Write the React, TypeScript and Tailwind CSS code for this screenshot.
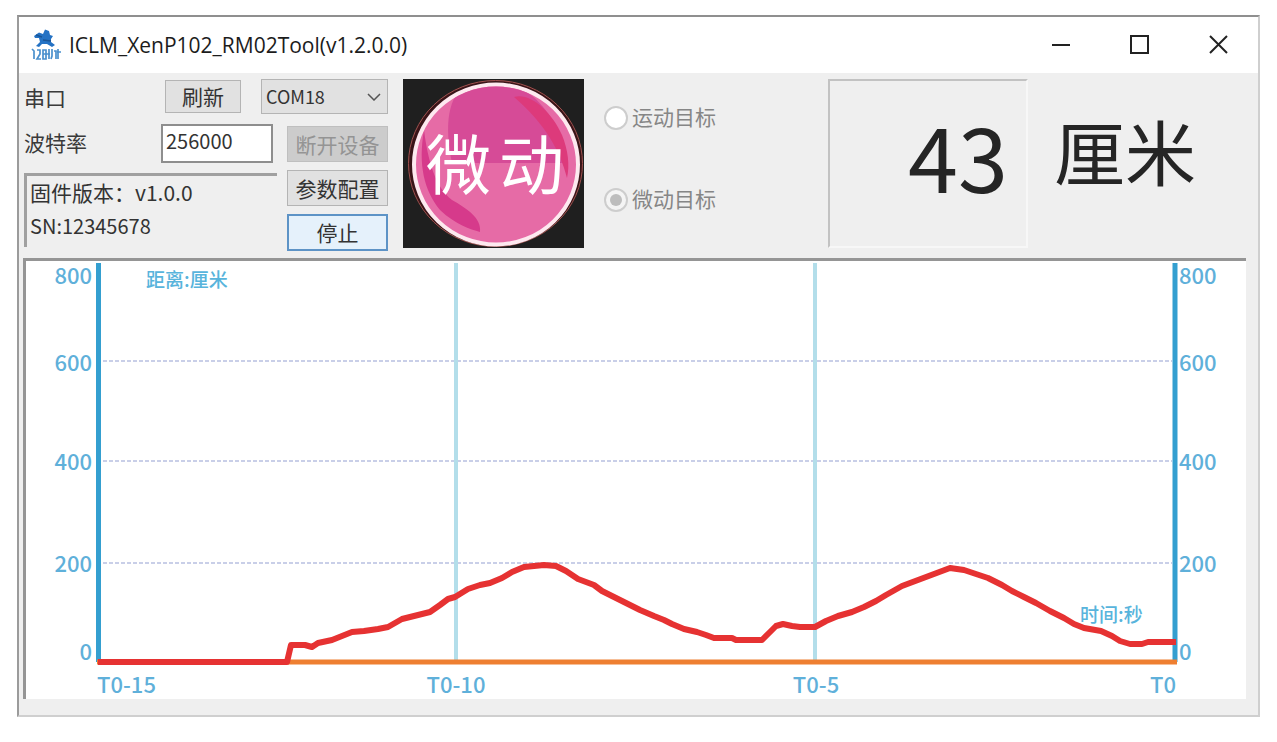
import React from "react";

const TRACE: [number, number][] = [
  [98, 662], [287, 662], [291, 645], [305, 645], [312, 647], [318, 643], [332, 640], [352, 632],
  [364, 631], [378, 629], [388, 627], [402, 619], [418, 615], [430, 612], [440, 605], [448, 599],
  [455, 597], [468, 589], [480, 585], [490, 583], [502, 578], [512, 572], [524, 567], [534, 566],
  [544, 565], [556, 566], [566, 571], [578, 579], [594, 585], [602, 591], [612, 596], [624, 602],
  [640, 610], [654, 616], [664, 620], [672, 624], [684, 629], [697, 632], [706, 635], [714, 638],
  [732, 638], [736, 640], [762, 640], [770, 632], [776, 626], [783, 624], [792, 626], [800, 627],
  [815, 627], [826, 621], [838, 616], [852, 612], [864, 607], [876, 601], [886, 595], [902, 586],
  [918, 580], [934, 574], [950, 568], [964, 570], [976, 574], [988, 578], [1002, 585], [1012, 591],
  [1024, 597], [1036, 603], [1050, 611], [1064, 618], [1074, 624], [1084, 628], [1101, 631],
  [1112, 636], [1120, 641], [1130, 644], [1142, 644], [1148, 642], [1176, 642],
];

const LEVELS = [
  { value: 800, y: 284 },
  { value: 600, y: 371 },
  { value: 400, y: 470 },
  { value: 200, y: 572 },
  { value: 0, y: 660 },
];

const TICKS = [
  { label: "T0-15", x: 97, anchor: "start" as const },
  { label: "T0-10", x: 456, anchor: "middle" as const },
  { label: "T0-5", x: 816, anchor: "middle" as const },
  { label: "T0", x: 1176, anchor: "end" as const },
];

function Logo() {
  return (
    <svg viewBox="0 0 30 32" className="h-8 w-[30px]" aria-hidden="true">
      <path
        d="M3 7 L8 3.500 L12 5 L14 0.500 L18 2 L19 6 L22 7 L20 10 L20 13 L24 16 L21 18 L16 15 L11 15 L8 18 L5 17 L9 13 L8 9 L4 9 Z"
        fill="#2472c4"
      />
      <path d="M5 6 L11 8 M12 11 L20 12" stroke="#1a5596" strokeWidth="1.500" />
      <path
        d="M1 20 L3 22 V30 M6 21 H9 V25 L6 30 H10 M12 21 H15 V30 H12 Z M12 25 H19 M18 20 V30 M21 20 V27 L20 30 M23 22 H25 V30 M27 20 V30 M26 23 H30"
        fill="none"
        stroke="#4a90cd"
        strokeWidth="1.700"
      />
    </svg>
  );
}

function TitleBar() {
  return (
    <header className="flex h-14 items-center bg-white pl-3">
      <Logo />
      <h1 className="ml-2 flex-1 text-[21px] leading-7 text-[#1c1c1c] font-['Open_Sans',sans-serif]">
        ICLM_XenP102_RM02Tool(v1.2.0.0)
      </h1>
      <div className="flex">
        <button type="button" aria-label="最小化" className="flex h-14 w-[79px] items-center justify-center">
          <svg viewBox="0 0 20 20" className="size-5" stroke="#222" strokeWidth="2">
            <path d="M1 10 H19" />
          </svg>
        </button>
        <button type="button" aria-label="最大化" className="flex h-14 w-[79px] items-center justify-center">
          <svg viewBox="0 0 20 20" className="size-5" fill="none" stroke="#222" strokeWidth="2">
            <rect x="1" y="1" width="17" height="17" />
          </svg>
        </button>
        <button type="button" aria-label="关闭" className="flex h-14 w-[79px] items-center justify-center">
          <svg viewBox="0 0 20 20" className="size-5" fill="none" stroke="#222" strokeWidth="2">
            <path d="M1 1 L18 18 M18 1 L1 18" />
          </svg>
        </button>
      </div>
    </header>
  );
}

function Connection() {
  return (
    <div className="w-[364px]">
      <div className="flex items-center">
        <label htmlFor="port" className="flex-1 text-[21px] leading-7">串口</label>
        <button
          type="button"
          className="mr-5 h-[33px] w-[76px] border border-[#b4b4b4] bg-[#e1e1e1] text-[21px] leading-none text-[#333]"
        >
          刷新
        </button>
        <div className="grid w-[127px] items-center">
          <select
            id="port"
            className="col-start-1 row-start-1 h-[35px] appearance-none border border-[#b4b4b4] bg-[#e1e1e1] pl-1 text-[18px] text-[#333]"
          >
            <option>COM18</option>
          </select>
          <svg
            viewBox="0 0 14 8"
            className="pointer-events-none col-start-1 row-start-1 mr-[7px] h-2 w-3.5 justify-self-end"
            fill="none"
            stroke="#555"
            strokeWidth="1.500"
          >
            <path d="M1 1 L7 7 L13 1" />
          </svg>
        </div>
      </div>
      <div className="mt-2.5 flex justify-between">
        <div className="w-[253px]">
          <div className="flex pr-1">
            <label htmlFor="baud" className="flex-1 pt-1 text-[21px] leading-7">波特率</label>
            <input
              id="baud"
              defaultValue="256000"
              className="h-[39px] w-[112px] border-2 border-[#8e8e8e] bg-white pb-1.5 pl-[3px] text-[20px] text-[#333]"
            />
          </div>
          <div className="mt-2.5 h-[74px] border-t-[3px] border-l-[3px] border-[#a0a0a0] pl-[3px] text-[#333]">
            <p className="text-[21px] leading-8">固件版本：v1.0.0</p>
            <p className="text-[20px] leading-9">SN:12345678</p>
          </div>
        </div>
        <div className="flex w-[101px] flex-col gap-2 pt-0.5">
          <button type="button" disabled className="h-9 border border-[#bfbfbf] bg-[#cccccc] text-[21px] leading-none text-[#949494]">
            断开设备
          </button>
          <button type="button" className="h-9 border border-[#b4b4b4] bg-[#e1e1e1] text-[21px] leading-none text-[#333]">
            参数配置
          </button>
          <button type="button" className="h-[37px] border-2 border-[#5d93c6] bg-[#e5f1fb] text-[21px] leading-none text-[#333]">
            停止
          </button>
        </div>
      </div>
    </div>
  );
}

function StateLamp() {
  return (
    <svg viewBox="403 79 181 169" className="h-[169px] w-[181px]" role="img" aria-label="微动">
      <defs>
        <clipPath id="disc">
          <ellipse cx="496" cy="164.500" rx="80" ry="78" />
        </clipPath>
      </defs>
      <rect x="403" y="79" width="181" height="169" fill="#1f1f1f" />
      <ellipse cx="495.500" cy="163.500" rx="87" ry="83" fill="#3a1418" stroke="#a0524f" strokeWidth="1" />
      <ellipse cx="496" cy="164.500" rx="82" ry="80" fill="#e66ba6" stroke="#fde9ef" strokeWidth="4" />
      <g clipPath="url(#disc)">
        <path d="M458 92 C470 84 500 82 524 90 C546 104 562 130 566 163 H452 C446 135 446 108 458 92 Z" fill="#d64b97" />
        <path d="M514 97 C530 92 552 112 562 135 C568 150 570 165 567 178 C560 150 545 124 514 97 Z" fill="#dd3a7b" />
        <path d="M424 130 C418 165 424 190 440 210 C456 225 470 229 480 232 C482 218 466 208 452 200 C436 188 428 162 424 130 Z" fill="#d63a8b" />
      </g>
      <text x="426" y="189" fontSize="65" fill="#fff">微</text>
      <text x="499" y="189" fontSize="65" fill="#fff">动</text>
    </svg>
  );
}

function TargetOption({ label, checked }: { label: string; checked?: boolean }) {
  return (
    <label className="flex items-center gap-1 text-[21px] text-[#868686]">
      <span className="grid place-items-center">
        <input
          type="radio"
          name="target"
          disabled
          defaultChecked={checked}
          className="peer col-start-1 row-start-1 size-6 appearance-none rounded-full border-2 border-[#cdcdcd] bg-white checked:bg-[#f4f4f4]"
        />
        <span className="col-start-1 row-start-1 hidden size-3 rounded-full bg-[#bdbdbd] peer-checked:block" />
      </span>
      <span className="pb-1 leading-6">{label}</span>
    </label>
  );
}

function Chart() {
  return (
    <section className="mr-3 ml-1 border-t-[3px] border-l-[3px] border-[#959595] bg-white">
      <svg viewBox="26 261 1220 438" className="block w-full overflow-visible" role="img" aria-label="距离-时间曲线">
        {[361, 461, 563].map((y) => (
          <path key={y} d={`M103 ${y} H1172`} stroke="#c9cfe8" strokeWidth="2" strokeDasharray="4 2" />
        ))}
        {[456, 815].map((x) => (
          <path key={x} d={`M${x} 263 V661`} stroke="#b3deea" strokeWidth="4" />
        ))}
        <path d="M98.500 263 V662 M1175 263 V662" stroke="#349fd0" strokeWidth="5" />
        <path d="M97 662 H1177" stroke="#ee7f31" strokeWidth="5" />
        <g fontSize="22" fontWeight="500" fill="#5fb0da">
          {LEVELS.map((l) => (
            <React.Fragment key={l.value}>
              <text x="92" y={l.y} textAnchor="end">{l.value}</text>
              <text x="1179" y={l.y}>{l.value}</text>
            </React.Fragment>
          ))}
          {TICKS.map((t) => (
            <text key={t.label} x={t.x} y="693" textAnchor={t.anchor}>{t.label}</text>
          ))}
        </g>
        <g fontSize="19" fontWeight="500" fill="#58b4dc">
          <text x="146" y="287">距离:厘米</text>
          <text x="1080" y="622">时间:秒</text>
        </g>
        <polyline
          points={TRACE.map((p) => p.join(",")).join(" ")}
          fill="none"
          stroke="#e63232"
          strokeWidth="6"
          strokeLinejoin="round"
        />
      </svg>
    </section>
  );
}

export default function App() {
  return (
    <div className="min-h-screen bg-white px-[17px] pt-[15px] font-['Noto_Sans_CJK_SC',sans-serif] text-[#3a3a3a]">
      <main className="border-2 border-t-[#8f8f8f] border-r-[#cfcfcf] border-b-[#cfcfcf] border-l-[#9b9b9b] bg-[#efefef] pb-4">
        <TitleBar />
        <div className="flex pt-1.5 pb-[7px] pl-[5px]">
          <Connection />
          <div className="ml-[15px]">
            <StateLamp />
          </div>
          <fieldset className="ml-5 flex flex-col gap-[54px] pt-[25px]">
            <TargetOption label="运动目标" />
            <TargetOption label="微动目标" checked />
          </fieldset>
          <div className="ml-auto flex h-[169px] text-[#252525]">
            <output className="flex w-[200px] items-center justify-end border-2 border-t-[#c2c2c2] border-r-[#f7f7f7] border-b-[#f7f7f7] border-l-[#c2c2c2] pr-[18px] pb-5 text-[90px] leading-none">
              43
            </output>
            <span className="mr-[62px] ml-[26px] self-center pb-7 text-[71px] leading-none">厘米</span>
          </div>
        </div>
        <Chart />
      </main>
    </div>
  );
}
